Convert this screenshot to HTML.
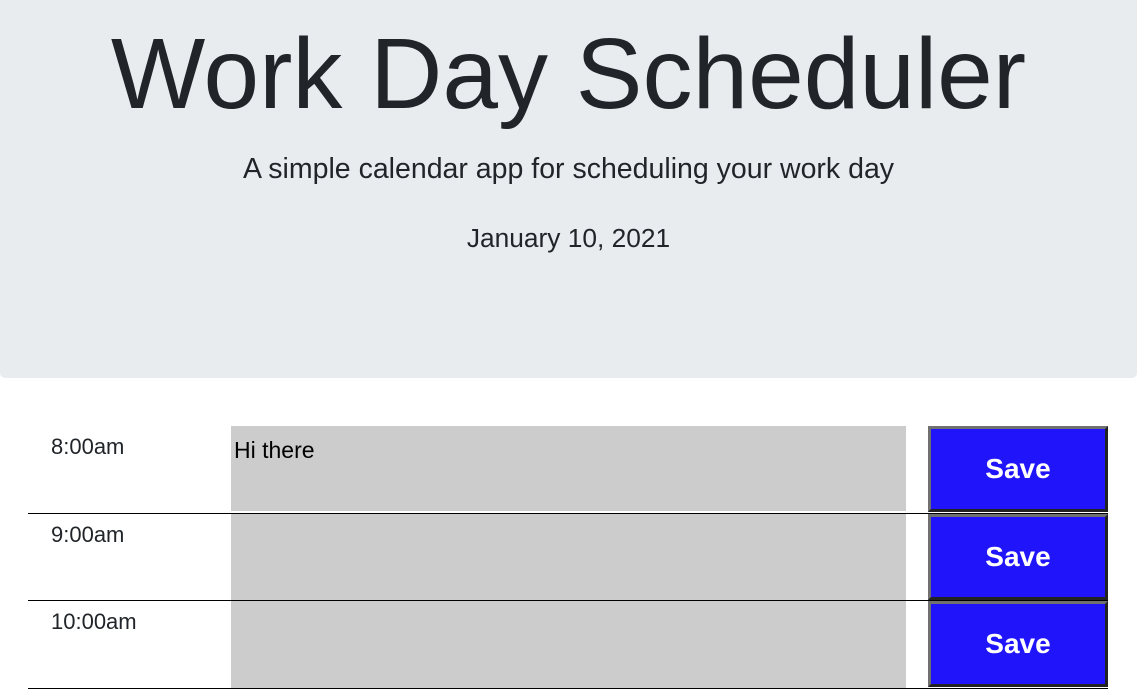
<!DOCTYPE html>
<html><head><meta charset="utf-8"><style>
*{margin:0;padding:0;box-sizing:border-box}
body{width:1137px;height:690px;background:#fff;font-family:"Liberation Sans",sans-serif;color:#212529;overflow:hidden;position:relative}
.jumbo{position:absolute;left:0;top:0;width:1137px;height:378px;background:#e9ecef;border-radius:0 0 5px 5px;text-align:center}
h1{position:absolute;top:14px;left:0;width:100%;font-weight:300;font-size:100px;line-height:120px;letter-spacing:0px}
.sub{position:absolute;top:151px;left:0;width:100%;font-size:28.5px;font-weight:300;line-height:36px}
.date{position:absolute;top:221px;left:0;width:100%;font-size:26.3px;font-weight:300;line-height:34px}
.row{position:absolute;left:28px;width:1080px;border-bottom:1px solid #000}
.time{position:absolute;left:23px;top:8px;font-size:22px}
.ta{position:absolute;left:203px;top:0;width:675px;background:#ccc;font-size:23px;padding:11px 3px;color:#000}
.btn{position:absolute;left:900px;top:0;width:180px;background:#2014fb;border:3px solid;border-color:#707070 #222 #222 #707070;color:#fff;font-weight:bold;font-size:28px;display:flex;align-items:center;justify-content:center}
</style></head><body>
<div class="jumbo">
<h1>Work Day Scheduler</h1>
<div class="sub">A simple calendar app for scheduling your work day</div>
<div class="date">January 10, 2021</div>
</div>
<div class="row" style="top:426px;height:88px"><div class="time">8:00am</div><div class="ta" style="height:85px">Hi there</div><div class="btn" style="height:86px">Save</div></div>
<div class="row" style="top:514px;height:87px"><div class="time">9:00am</div><div class="ta" style="height:86px"></div><div class="btn" style="height:86px">Save</div></div>
<div class="row" style="top:601px;height:88px"><div class="time">10:00am</div><div class="ta" style="height:87px"></div><div class="btn" style="height:86px">Save</div></div>
</body></html>
